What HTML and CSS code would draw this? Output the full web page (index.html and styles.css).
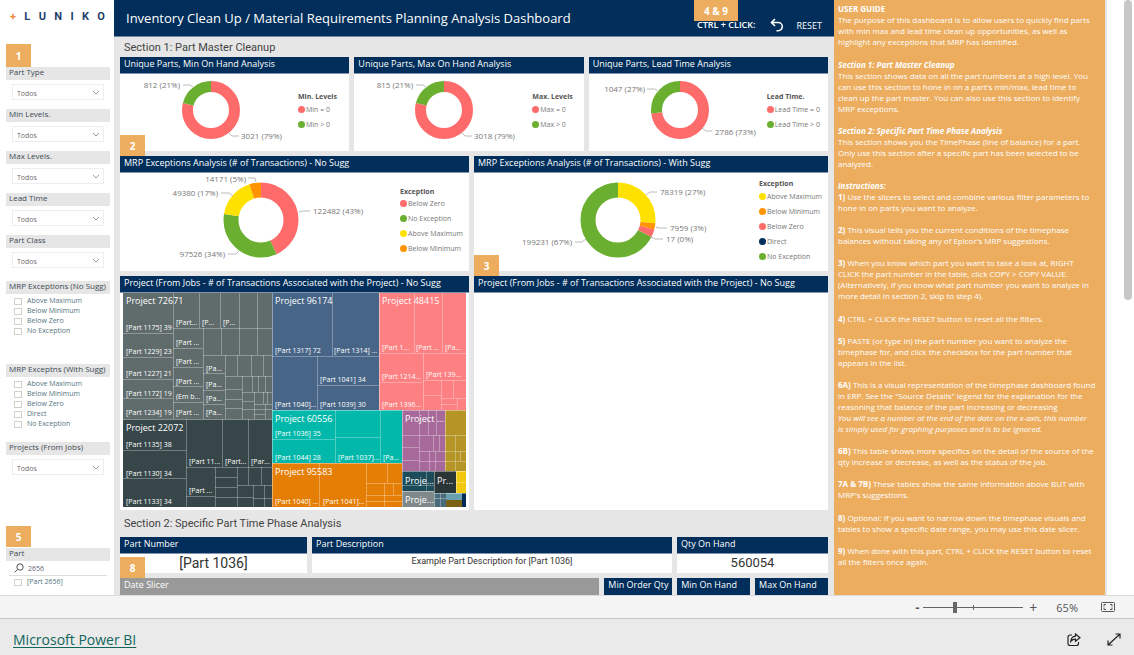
FILE: index.html
```html
<!DOCTYPE html>
<html lang="en">
<head>
<meta charset="utf-8">
<title>Inventory Clean Up / Material Requirements Planning Analysis Dashboard</title>
<link rel="stylesheet" href="styles.css">
</head>
<body>
<main class="report">
  <aside class="sidebar">
    <div class="logo"><span class="logo-plus">+</span><span>L</span><span>U</span><span>N</span><span>I</span><span>K</span><span>O</span></div>
    <span class="badge badge-filters">1</span>
    <div class="slicer">
      <label class="slicer-title" for="part-type">Part Type</label>
      <div class="dropdown"><select id="part-type"><option>Todos</option></select><svg viewBox="0 0 8 5"><path d="M1 1l3 3 3-3"/></svg></div>
    </div>
    <div class="slicer">
      <label class="slicer-title" for="min-levels">Min Levels.</label>
      <div class="dropdown"><select id="min-levels"><option>Todos</option></select><svg viewBox="0 0 8 5"><path d="M1 1l3 3 3-3"/></svg></div>
    </div>
    <div class="slicer">
      <label class="slicer-title" for="max-levels">Max Levels.</label>
      <div class="dropdown"><select id="max-levels"><option>Todos</option></select><svg viewBox="0 0 8 5"><path d="M1 1l3 3 3-3"/></svg></div>
    </div>
    <div class="slicer">
      <label class="slicer-title" for="lead-time">Lead Time</label>
      <div class="dropdown"><select id="lead-time"><option>Todos</option></select><svg viewBox="0 0 8 5"><path d="M1 1l3 3 3-3"/></svg></div>
    </div>
    <div class="slicer slicer-class">
      <label class="slicer-title" for="part-class">Part Class</label>
      <div class="dropdown"><select id="part-class"><option>Todos</option></select><svg viewBox="0 0 8 5"><path d="M1 1l3 3 3-3"/></svg></div>
    </div>
    <div class="slicer slicer-nosugg">
      <div class="slicer-title">MRP Exceptions (No Sugg)</div>
      <div class="checks">
        <label><input type="checkbox">Above Maximum</label>
        <label><input type="checkbox">Below Minimum</label>
        <label><input type="checkbox">Below Zero</label>
        <label><input type="checkbox">No Exception</label>
      </div>
    </div>
    <div class="slicer slicer-sugg">
      <div class="slicer-title">MRP Exceptns (With Sugg)</div>
      <div class="checks">
        <label><input type="checkbox">Above Maximum</label>
        <label><input type="checkbox">Below Minimum</label>
        <label><input type="checkbox">Below Zero</label>
        <label><input type="checkbox">Direct</label>
        <label><input type="checkbox">No Exception</label>
      </div>
    </div>
    <div class="slicer slicer-projects">
      <label class="slicer-title" for="projects">Projects (From Jobs)</label>
      <div class="dropdown"><select id="projects"><option>Todos</option></select><svg viewBox="0 0 8 5"><path d="M1 1l3 3 3-3"/></svg></div>
    </div>
    <span class="badge badge-part">5</span>
    <div class="slicer slicer-part">
      <label class="slicer-title" for="part-search">Part</label>
      <div class="search"><svg viewBox="0 0 10 10"><circle cx="6" cy="4" r="3.2"/><path d="M3.700 6.300L.6 9.400"/></svg><input id="part-search" type="text" value="2656"></div>
      <div class="checks"><label><input type="checkbox">[Part 2656]</label></div>
    </div>
  </aside>

  <div class="center">
    <header class="topbar">
      <h1>Inventory Clean Up / Material Requirements Planning Analysis Dashboard</h1>
      <span class="hint">CTRL + CLICK:</span>
      <button class="reset" type="button"><svg viewBox="0 0 14 14"><path d="M5 1L1.500 4.500 5 8M2 4.500h6.200a4.100 4.100 0 0 1 0 8.200H6.500"/></svg>RESET</button>
      <span class="badge badge-reset">4 &amp; 9</span>
    </header>

    <div class="canvas">
      <h2 class="section-title">Section 1: Part Master Cleanup</h2>

      <div class="row row-unique">
        <section class="panel">
          <h3>Unique Parts, Min On Hand Analysis</h3>
          <div class="chart">
            <svg class="donut" viewBox="0 0 178 77">
              <g class="ring ring-small" transform="rotate(-90 91 36)">
                <circle class="c-pink" cx="91" cy="36" r="23.500" pathLength="100" stroke-dasharray="79 100"/>
                <circle class="c-green" cx="91" cy="36" r="23.500" pathLength="100" stroke-dasharray="21 100" stroke-dashoffset="-79"/>
              </g>
              <path class="leader" d="M63 11h7l4 3M109 59l3 3h7"/>
              <text x="60" y="14" text-anchor="end">812 (21%)</text><text x="121" y="65">3021 (79%)</text>
            </svg>
            <ul class="legend"><li class="legend-title">Min. Levels</li><li class="pink">Min = 0</li><li class="green">Min &gt; 0</li></ul>
          </div>
          <span class="badge badge-row">2</span>
        </section>
        <section class="panel">
          <h3>Unique Parts, Max On Hand Analysis</h3>
          <div class="chart">
            <svg class="donut" viewBox="0 0 178 77">
              <g class="ring ring-small" transform="rotate(-90 90 36)">
                <circle class="c-pink" cx="90" cy="36" r="23.500" pathLength="100" stroke-dasharray="79 100"/>
                <circle class="c-green" cx="90" cy="36" r="23.500" pathLength="100" stroke-dasharray="21 100" stroke-dashoffset="-79"/>
              </g>
              <path class="leader" d="M62 11h7l4 3M108 59l3 3h7"/>
              <text x="59" y="14" text-anchor="end">815 (21%)</text><text x="120" y="65">3018 (79%)</text>
            </svg>
            <ul class="legend"><li class="legend-title">Max. Levels</li><li class="pink">Max = 0</li><li class="green">Max &gt; 0</li></ul>
          </div>
        </section>
        <section class="panel">
          <h3>Unique Parts, Lead Time Analysis</h3>
          <div class="chart">
            <svg class="donut" viewBox="0 0 178 77">
              <g class="ring ring-small" transform="rotate(-90 91 36)">
                <circle class="c-pink" cx="91" cy="36" r="23.500" pathLength="100" stroke-dasharray="73 100"/>
                <circle class="c-green" cx="91" cy="36" r="23.500" pathLength="100" stroke-dasharray="27 100" stroke-dashoffset="-73"/>
              </g>
              <path class="leader" d="M58 15h8l4 3M113 54l4 3h6"/>
              <text x="56" y="18" text-anchor="end">1047 (27%)</text><text x="126" y="61">2786 (73%)</text>
            </svg>
            <ul class="legend"><li class="legend-title">Lead Time.</li><li class="pink">Lead Time = 0</li><li class="green">Lead Time &gt; 0</li></ul>
          </div>
        </section>
      </div>

      <div class="row row-mrp">
        <section class="panel">
          <h3>MRP Exceptions Analysis (# of Transactions) - No Sugg</h3>
          <div class="chart">
            <svg class="donut donut-wide" viewBox="0 0 280 98">
              <g class="ring" transform="rotate(-90 141 47)">
                <circle class="c-pink" cx="141" cy="47" r="30" pathLength="100" stroke-dasharray="43.200 100"/>
                <circle class="c-green" cx="141" cy="47" r="30" pathLength="100" stroke-dasharray="34.400 100" stroke-dashoffset="-43.200"/>
                <circle class="c-yellow" cx="141" cy="47" r="30" pathLength="100" stroke-dasharray="17.400 100" stroke-dashoffset="-77.600"/>
                <circle class="c-orange" cx="141" cy="47" r="30" pathLength="100" stroke-dasharray="5 100" stroke-dashoffset="-95"/>
              </g>
              <path class="leader" d="M128 5h7l1 4M101 20h8l4 3M179 39l4-1h7M108 81h8l3-3"/>
              <text x="126" y="9" text-anchor="end">14171 (5%)</text><text x="98" y="23" text-anchor="end">49380 (17%)</text>
              <text x="193" y="41">122482 (43%)</text><text x="105" y="84" text-anchor="end">97526 (34%)</text>
            </svg>
            <ul class="legend"><li class="legend-title">Exception</li><li class="pink">Below Zero</li><li class="green">No Exception</li><li class="yellow">Above Maximum</li><li class="orange">Below Minimum</li></ul>
          </div>
        </section>
        <section class="panel">
          <h3>MRP Exceptions Analysis (# of Transactions) - With Sugg</h3>
          <div class="chart">
            <svg class="donut donut-wide" viewBox="0 0 280 98">
              <g class="ring" transform="rotate(-90 144 47)">
                <circle class="c-yellow" cx="144" cy="47" r="30" pathLength="100" stroke-dasharray="26.400 100"/>
                <circle class="c-orange" cx="144" cy="47" r="30" pathLength="100" stroke-dasharray="2.700 100" stroke-dashoffset="-26.400"/>
                <circle class="c-pink" cx="144" cy="47" r="30" pathLength="100" stroke-dasharray="3.400 100" stroke-dashoffset="-29.100"/>
                <circle class="c-green" cx="144" cy="47" r="30" pathLength="100" stroke-dasharray="67.500 100" stroke-dashoffset="-32.500"/>
              </g>
              <path class="leader" d="M172 22l4-3h7M182 54l3 1h8M177 64l4 2h8M101 69h7l4-3"/>
              <text x="186" y="22">78319 (27%)</text><text x="196" y="58">7959 (3%)</text>
              <text x="192" y="69">17 (0%)</text><text x="98" y="72" text-anchor="end">199231 (67%)</text>
            </svg>
            <ul class="legend legend-far"><li class="legend-title">Exception</li><li class="yellow">Above Maximum</li><li class="orange">Below Minimum</li><li class="pink">Below Zero</li><li class="navy">Direct</li><li class="green">No Exception</li></ul>
          </div>
          <span class="badge badge-row">3</span>
        </section>
      </div>

      <div class="row row-projects">
        <section class="panel">
          <h3>Project (From Jobs - # of Transactions Associated with the Project) - No Sugg</h3>
          <svg class="treemap" viewBox="0 0 343 214">
            <rect width="149" height="126" fill="#606b6c"/>
            <rect y="126" width="149" height="88" fill="#374649"/>
            <rect x="149" width="107" height="117" fill="#476587"/>
            <rect x="256" width="87" height="117" fill="#fd8082"/>
            <rect x="149" y="117" width="130" height="53" fill="#01b8aa"/>
            <rect x="149" y="170" width="130" height="44" fill="#e57e05"/>
            <rect x="279" y="117" width="43" height="61" fill="#a66999"/>
            <rect x="322" y="117" width="21" height="61" fill="#b59525"/>
            <rect x="279" y="178" width="32" height="20" fill="#1c4b59"/>
            <rect x="279" y="198" width="32" height="16" fill="#7f898a"/>
            <rect x="311" y="178" width="22" height="22" fill="#2a3537"/>
            <rect x="333" y="178" width="10" height="22" fill="#f2c80f"/>
            <rect x="311" y="200" width="12" height="14" fill="#4a6b79"/>
            <rect x="323" y="200" width="16" height="7" fill="#6a9fb0"/>
            <rect x="323" y="207" width="16" height="7" fill="#7a6215"/>
            <rect x="339" y="200" width="4" height="14" fill="#012b57"/>
            <path class="split" d="M50.500 0V126M0 40.500H50M0 64.500H50M0 86.500H50M0 105.500H50
              M76.500 0V35M97.500 0V35M116.500 0V62M134.500 0V62M98.500 35V62M50 35.500H149
              M80.500 35V126M50 55.500H80M50 74.500H80M50 93.500H80M50 109.500H80M80 62.500H149
              M102.500 62V126M80 80.500H102M80 97.500H102M80 111.500H102M114.500 62V83M128.500 62V83M140.500 62V83M102 83.500H149
              M119.500 83V126M102 96.500H119M102 106.500H119M102 115.500H119M129.500 83V99M135.500 83V99M142.500 83V99M119 99.500H149
              M131.500 99V126M119 108.500H131M119 116.500H131M140.500 99V111M144.500 99V111M131 111.500H149M131 116.500H149M131 121.500H142M142.500 111V126"/>
            <path class="split" d="M63.500 126V214M0 157.500H63M0 185.500H63M99.500 126V174M125.500 126V192M63 174.500H149
              M92.500 174V214M63 203.500H92M114.500 174V214M92 184.500H114M92 194.500H114M92 204.500H114
              M138.500 174V192M114 192.500H149M130.500 192V214M114 204.500H130M141.500 192V214M130 205.500H149"/>
            <path class="split" d="M209.500 0V63M149 63.500H256M194.500 63V117M194 92.500H256"/>
            <path class="split" d="M291.500 0V60M319.500 0V60M256 60.500H343M300.500 60V117M256 89.500H300M300 87.500H343
              M300 102.500H318M318.500 87V117M330.500 87V105M318 105.500H343M334.500 105V117M318 111.500H334"/>
            <path class="split" d="M212.500 117V170M149 146.500H212M212 144.500H257M257.500 117V170"/>
            <path class="split" d="M196.500 170V214M243.500 170V214M264.500 170V190M243 190.500H279M261.500 190V214M270.500 190V202M243 202.500H279M243 208.500H279"/>
            <path class="split" d="M296.500 117V178M279 142.500H343M279 154.500H296M279 167.500H296M305.500 117V142M313.500 117V142
              M310.500 142V158M316.500 142V158M296 158.500H343M306.500 158V178M312.500 158V178M296 168.500H343
              M332.500 142V178M337.500 158V168M303.500 178V198M279 192.500H311M333 189.500H343M317.500 200V214M311 205.500H323"/>
            <path class="edge" d="M149.500 0V214M256.500 0V117M279.500 117V214M322.500 117V178M311.500 178V214M333.500 178V200M0 126.500H149M149 117.500H343M149 170.500H279M279 178.500H343M279 198.500H311M311 200.500H343"/>
            <g class="project">
              <text x="3" y="11">Project 72671</text><text x="3" y="138">Project 22072</text>
              <text x="152" y="11">Project 96174</text><text x="259" y="11">Project 48415</text>
              <text x="152" y="129">Project 60556</text><text x="152" y="182">Project 95583</text>
              <text x="282" y="129">Project ...</text><text x="282" y="191">Proje...</text>
              <text x="282" y="210">Proje...</text><text x="314" y="191">Pr...</text>
            </g>
            <g class="part">
              <text x="3" y="37">[Part 1175] 39</text><text x="3" y="61">[Part 1229] 23</text><text x="3" y="83">[Part 1227] 21</text>
              <text x="3" y="103">[Part 1172] 19</text><text x="3" y="122">[Part 1234] 19</text>
              <text x="53" y="32">[Part...</text><text x="79" y="32">[P...</text><text x="100" y="32">[P...</text>
              <text x="53" y="52">[Part ...</text><text x="53" y="71">[Part ...</text><text x="53" y="91">[Part ...</text>
              <text x="53" y="106">(Em b...</text><text x="53" y="122">[Part ...</text>
              <text x="83" y="78">[Pa...</text><text x="83" y="94">[Pa...</text><text x="83" y="108">[Pa...</text><text x="83" y="122">[Pa...</text>
              <text x="3" y="154">[Part 1135] 38</text><text x="3" y="183">[Part 1130] 34</text><text x="3" y="211">[Part 1133] 34</text>
              <text x="66" y="171">[Part 11...</text><text x="102" y="171">[Part...</text><text x="128" y="171">[Par...</text><text x="66" y="200">[Part ...</text>
              <text x="152" y="60">[Part 1317] 72</text><text x="211" y="60">[Part 1314] ...</text><text x="197" y="89">[Part 1041] 34</text>
              <text x="152" y="114">[Part 1040]...</text><text x="197" y="114">[Part 1039] 30</text>
              <text x="259" y="57">[Part 1...</text><text x="293" y="57">[Part ...</text><text x="322" y="57">[Pa...</text>
              <text x="259" y="86">[Part 1214...</text><text x="303" y="84">[Part 139...</text><text x="259" y="114">[Part 1396...</text>
              <text x="152" y="143">[Part 1036] 35</text><text x="152" y="167">[Part 1044] 28</text><text x="215" y="167">[Part 1037]...</text><text x="260" y="167">[Pa...</text>
              <text x="152" y="211">[Part 1040] ...</text><text x="200" y="211">[Part 1041]...</text>
            </g>
          </svg>
        </section>
        <section class="panel">
          <h3>Project (From Jobs - # of Transactions Associated with the Project) - No Sugg</h3>
        </section>
      </div>

      <h2 class="section-title section-two">Section 2: Specific Part Time Phase Analysis</h2>

      <div class="row row-part">
        <section class="panel"><h3>Part Number</h3><p class="value">[Part 1036]</p><span class="badge badge-row">8</span></section>
        <section class="panel"><h3>Part Description</h3><p class="value value-small">Example Part Description for [Part 1036]</p></section>
        <section class="panel"><h3>Qty On Hand</h3><p class="value value-number">560054</p></section>
      </div>

      <div class="row row-date">
        <h3 class="date-slicer">Date Slicer</h3>
        <h3>Min Order Qty</h3>
        <h3>Min On Hand</h3>
        <h3>Max On Hand</h3>
      </div>
    </div>
  </div>

  <article class="guide">
    <p class="roomy"><b>USER GUIDE</b><br>The purpose of this dashboard is to allow users to quickly find parts<br>with min max and lead time clean up opportunities, as well as<br>highlight any exceptions that MRP has identified.</p>
    <p><b><i>Section 1: Part Master Cleanup</i></b><br>This section shows data on all the part numbers at a high level. You<br>can use this section to hone in on a part's min/max, lead time to<br>clean up the part master. You can also use this section to identify<br>MRP exceptions.</p>
    <p><b><i>Section 2: Specific Part Time Phase Analysis</i></b><br>This section shows you the TimePhase (line of balance) for a part.<br>Only use this section after a specific part has been selected to be<br>analyzed.</p>
    <p><b><i>Instructions:</i></b><br><b>1)</b> Use the slicers to select and combine various filter parameters to<br>hone in on parts you want to analyze.</p>
    <p><b>2)</b> This visual tells you the current conditions of the timephase<br>balances without taking any of Epicor's MRP suggestions.</p>
    <p class="roomy"><b>3)</b> When you know which part you want to take a look at, RIGHT<br>CLICK the part number in the table, click COPY &gt; COPY VALUE.<br>(Alternatively, if you know what part number you want to analyze in<br>more detail in section 2, skip to step 4).</p>
    <p><b>4)</b> CTRL + CLICK the RESET button to reset all the filters.</p>
    <p><b>5)</b> PASTE (or type in) the part number you want to analyze the<br>timephase for, and click the checkbox for the part number that<br>appears in the list.</p>
    <p><b>6A)</b> This is a visual representation of the timephase dashboard found<br>in ERP. See the "Source Details" legend for the explanation for the<br>reasoning that balance of the part increasing or decreasing<br><i>You will see a number at the end of the date on the x-axis, this number<br>is simply used for graphing purposes and is to be ignored.</i></p>
    <p><b>6B)</b> This table shows more specifics on the detail of the source of the<br>qty increase or decrease, as well as the status of the job.</p>
    <p class="roomy"><b>7A &amp; 7B)</b> These tables show the same information above BUT with<br>MRP's suggestions.</p>
    <p><b>8)</b> Optional: If you want to narrow down the timephase visuals and<br>tables to show a specific date range, you may use this date slicer.</p>
    <p><b>9)</b> When done with this part, CTRL + CLICK the RESET button to reset<br>all the filters once again.</p>
  </article>
  <div class="scroll-track"><div class="scroll-thumb"></div></div>
</main>

<div class="zoombar">
  <button type="button" class="zoom-out" aria-label="Zoom out">-</button>
  <div class="zoom-slider"><input type="range" min="0" max="100" value="31" aria-label="Zoom"></div>
  <button type="button" class="zoom-in" aria-label="Zoom in">+</button>
  <span class="zoom-value">65%</span>
  <button type="button" class="fit" aria-label="Fit to page"><svg viewBox="0 0 14 10"><rect x=".5" y=".5" width="13" height="9" rx="1"/><path d="M3 4.500V2.500h2M9 2.500h2v2M11 5.500v2H9M5 7.500H3v-2"/></svg></button>
</div>

<footer class="footer">
  <a href="#">Microsoft Power BI</a>
  <button type="button" aria-label="Share"><svg viewBox="0 0 14 13"><path d="M5 2H3a2 2 0 0 0-2 2v6.500a2 2 0 0 0 2 2h6.500a2 2 0 0 0 2-2V9M8.500 1l4.500 3.700-4.500 3.600V6.200C6.500 6.200 5 6.800 3.800 8.400 4 5.400 5.700 3.300 8.500 3.100z"/></svg></button>
  <button type="button" aria-label="Full screen"><svg viewBox="0 0 14 13"><path d="M1 12L13 1M8.500 1H13v4.500M1 7.500V12h4.500"/></svg></button>
</footer>
</body>
</html>
```
FILE: styles.css
```css
:root {
  --navy: #012e5a;
  --amber: #ecad5f;
  --grey: #e6e6e6;
  --pink: #fe6b6b;
  --green: #6aaf2f;
  --yellow: #ffe100;
  --orange: #ff9400;
}
* { box-sizing: border-box; }
body {
  margin: 0;
  min-height: 100vh;
  display: flex;
  flex-direction: column;
  font-family: "Open Sans", "Noto Sans", sans-serif;
  background: #fff;
}
h1, h2, h3, p, ul { margin: 0; padding: 0; font-weight: 400; }
button { border: 0; padding: 0; background: none; font: inherit; color: inherit; }
svg { display: block; }

.report { flex: 1; display: flex; }

/* Filter column */
.sidebar { flex: 0 0 114px; padding: 8px 4px 0 6px; font-size: 8px; color: #404a55; }
.logo { display: flex; justify-content: space-between; height: 16px; padding: 0 5px 0 4px; line-height: 17px; font-family: Roboto, sans-serif; font-weight: 700; font-size: 11px; color: #1d3f6e; }
.logo-plus { color: #ee8a3c; }
.badge { display: flex; align-items: center; justify-content: center; width: 25px; height: 21px; background: var(--amber); color: #fff; font-size: 10px; font-weight: 700; }
.badge-filters { height: 23px; margin-top: 20px; }
.badge-part { margin: 51px 0 1px; }
.slicer { margin-bottom: 9px; }
.slicer-title { display: block; height: 13px; line-height: 10px; padding-left: 3px; margin-bottom: 4px; background: var(--grey); white-space: nowrap; }
.dropdown { display: grid; align-items: center; margin: 0 6px; height: 16px; border: 1px solid #ededed; color: #6d6d6d; }
.dropdown > * { grid-area: 1 / 1; }
.dropdown select { appearance: none; width: 100%; border: 0; padding: 2px 4px 0; background: none; font: inherit; font-size: 7px; line-height: 11px; color: inherit; }
.dropdown svg { justify-self: end; width: 8px; height: 5px; margin-right: 3px; fill: none; stroke: #999; pointer-events: none; }
.slicer-class { margin-bottom: 13px; }
.slicer-nosugg { margin-bottom: 28px; }
.slicer-sugg { margin-bottom: 13px; }
.slicer-nosugg .slicer-title, .slicer-sugg .slicer-title { margin-bottom: 2px; }
.slicer-projects { margin-bottom: 0; }
.slicer-part { margin-bottom: 0; }
.slicer-part .slicer-title { margin-bottom: 0; }
.checks { display: flex; flex-direction: column; padding-left: 8px; font-size: 7px; color: #56757f; }
.checks label { display: flex; align-items: center; gap: 5px; height: 10px; line-height: 10px; }
.checks input { appearance: none; width: 8px; height: 7px; margin: 0; border: 1px solid #d2d2c8; background: #fff; }
.search { display: flex; align-items: center; gap: 4px; margin: 0 3px 1px; padding: 0 5px; height: 15px; border-bottom: 1px solid #ddd; }
.search svg { width: 10px; height: 10px; fill: none; stroke: #555; }
.search input { width: 60px; border: 0; padding: 0; background: none; font: inherit; font-size: 7px; color: #667; }

/* Dashboard */
.center { flex: 1; min-width: 0; background: var(--grey); }
.topbar { position: relative; display: flex; align-items: center; height: 37px; padding: 0 12px; background: var(--navy); color: #fff; border-bottom: 1px solid #7088a5; white-space: nowrap; }
.topbar h1 { flex: 1; font-size: 13px; }
.hint { font-size: 9px; font-weight: 600; padding-top: 12px; }
.reset { display: flex; align-items: center; gap: 13px; padding: 14px 0 0 14px; font-size: 9px; }
.reset svg { width: 14px; height: 14px; fill: none; stroke: #fff; stroke-width: 1.600; }
.badge-reset { position: absolute; top: 0; right: 96px; width: 44px; }
.canvas { padding: 0 6px; }
.section-title { height: 20px; line-height: 22px; padding-left: 4px; font-family: Roboto, sans-serif; font-size: 11px; color: #444; }
.section-two { height: 27px; line-height: 28px; margin-top: -5px; }
.row { display: grid; gap: 5px; margin-bottom: 5px; }
.row h3 { height: 17px; line-height: 14px; padding-left: 4px; background: var(--navy); border-bottom: 1px solid #8295ad; color: #fff; font-size: 9px; white-space: nowrap; overflow: hidden; }
.row-unique { grid-template-columns: 229fr 229fr 239fr; }
.row-mrp, .row-projects { grid-template-columns: 349fr 354fr; }
.row-part { grid-template-columns: 187fr 360fr 151fr; }
.row-date { grid-template-columns: 480fr 68fr 73fr 73fr; margin-bottom: 0; }
.row-date h3 { border-bottom: 0; }
.row .date-slicer { background: #999; }
.panel { position: relative; display: flex; flex-direction: column; min-width: 0; background: #fff; }
.badge-row { position: absolute; left: 0; bottom: -5px; }
.chart { display: flex; align-items: center; }
.donut { flex: 0 1 178px; height: 77px; }
.donut-wide { flex-basis: 280px; height: 98px; }
.donut text { font-size: 8px; fill: #777; }
.ring { fill: none; stroke-width: 15; }
.ring-small { stroke-width: 11; }
.c-pink { stroke: var(--pink); }
.c-green { stroke: var(--green); }
.c-yellow { stroke: var(--yellow); }
.c-orange { stroke: var(--orange); }
.leader { fill: none; stroke: #bbb; }
.legend { list-style: none; padding-bottom: 2px; font-size: 7px; color: #777; white-space: nowrap; }
.legend-far { padding-left: 5px; }
.legend li { display: flex; align-items: center; gap: 1px; height: 15px; }
.legend li::before { content: ""; width: 7px; height: 7px; border-radius: 50%; background: currentcolor; }
.legend .legend-title { height: 10px; font-weight: 700; color: #555; }
.legend .legend-title::before { display: none; }
.legend .pink::before { background: var(--pink); }
.legend .green::before { background: var(--green); }
.legend .yellow::before { background: var(--yellow); }
.legend .orange::before { background: var(--orange); }
.legend .navy::before { background: var(--navy); }
.treemap { width: calc(100% - 6px); margin: 0 3px 3px; fill: #fff; }
.split { fill: none; stroke: #fff; stroke-opacity: 0.300; }
.edge { fill: none; stroke: #fff; stroke-opacity: 0.400; }
.project { font-size: 9px; }
.part { font-size: 7px; }
.value { height: 19px; line-height: 18px; text-align: center; font-family: Roboto, sans-serif; font-size: 14px; color: #333; }
.value-small { font-size: 9px; line-height: 15px; }
.value-number { font-size: 13px; line-height: 17px; }

/* Guide text */
.guide { flex: 0 0 273px; min-width: 0; padding: 3px 0 0 4px; background: var(--amber); border-right: 2px solid var(--grey); color: #fff; font-size: 8px; line-height: 11px; white-space: nowrap; }
.guide p { margin-bottom: 11px; font-weight: 500; }
.guide .roomy { margin-bottom: 12px; }
.scroll-track { flex: 0 0 27px; padding: 0 2px 0 17px; }
.scroll-thumb { height: 300px; border-radius: 4px; background: #c8c8c8; }

/* Zoom controls */
.zoombar { display: flex; align-items: center; justify-content: flex-end; height: 23px; padding-right: 19px; background: #f4f4f4; border-top: 1px solid #dcdcdc; color: #555; font-size: 12px; }
.zoom-out { font-weight: 700; }
.zoom-slider { position: relative; width: 100px; height: 13px; margin: 0 6px 0 4px; }
.zoom-slider::after { content: ""; position: absolute; left: 50%; top: 4px; width: 1px; height: 5px; background: #666; }
.zoom-slider input { appearance: none; display: block; width: 100%; height: 13px; margin: 0; background: linear-gradient(#666, #666) center / 100% 1px no-repeat; }
.zoom-slider input::-webkit-slider-thumb { appearance: none; width: 4px; height: 11px; background: #666; }
.zoom-in { font-size: 14px; }
.zoom-value { margin: 0 23px 0 19px; font-size: 11px; }
.fit svg { width: 14px; height: 10px; fill: none; stroke: #555; }

.footer { display: flex; align-items: center; gap: 26px; height: 37px; padding: 4px 13px 0; background: #eaeaea; border-top: 1px solid #c8c8c8; }
.footer a { margin-right: auto; color: #11655c; font-size: 14px; text-decoration: underline; text-underline-offset: 2px; }
.footer svg { width: 14px; height: 13px; fill: none; stroke: #222; stroke-width: 1.200; }
```
